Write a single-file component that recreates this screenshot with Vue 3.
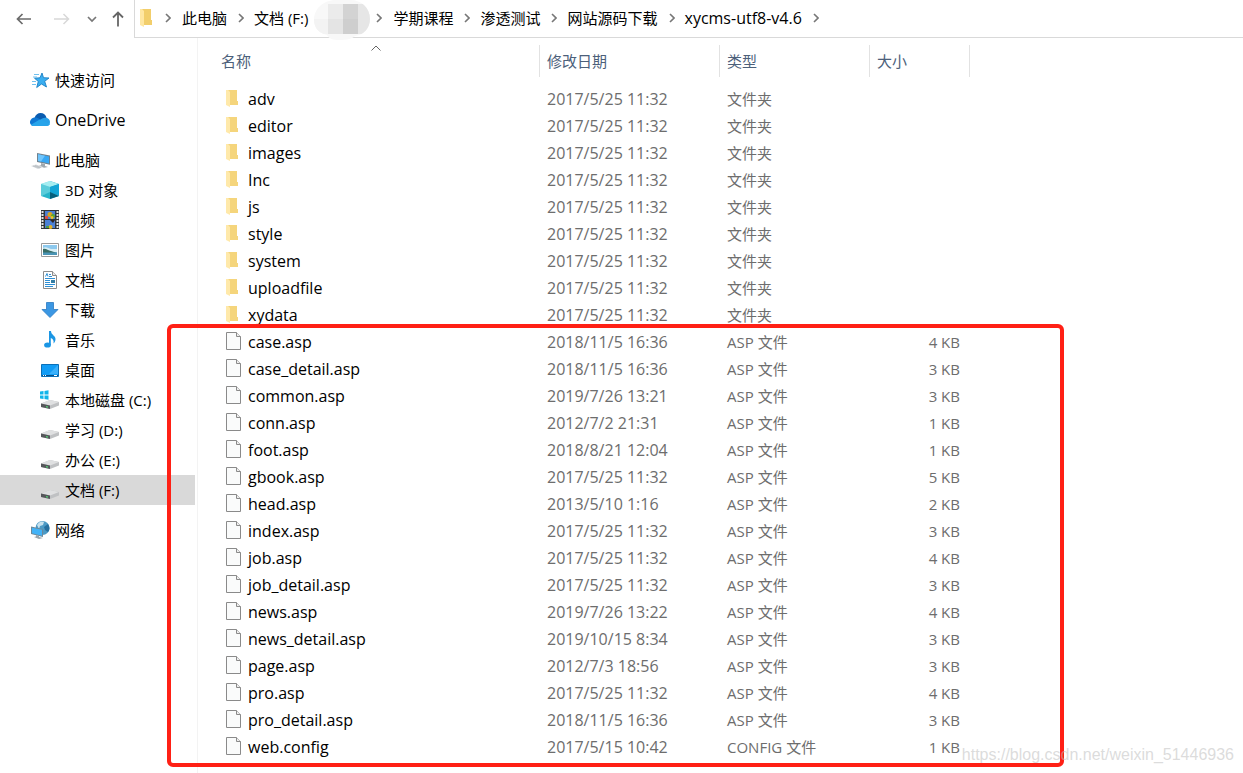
<script setup>
const crumbs = [
  { label: '此电脑' },
  { label: '文档 (F:)', masked: true },
  { label: '学期课程' },
  { label: '渗透测试' },
  { label: '网站源码下载' },
  { label: 'xycms-utf8-v4.6', latin: true },
]

const places = [
  { icon: 'star', label: '快速访问', root: true },
  { icon: 'cloud', label: 'OneDrive', root: true, latin: true },
  { icon: 'pc', label: '此电脑', root: true },
  { icon: 'cube', label: '3D 对象' },
  { icon: 'video', label: '视频' },
  { icon: 'picture', label: '图片' },
  { icon: 'doc', label: '文档' },
  { icon: 'download', label: '下载' },
  { icon: 'music', label: '音乐' },
  { icon: 'desktop', label: '桌面' },
  { icon: 'system', label: '本地磁盘 (C:)' },
  { icon: 'drive', label: '学习 (D:)' },
  { icon: 'drive', label: '办公 (E:)' },
  { icon: 'drive', label: '文档 (F:)', active: true },
  { icon: 'network', label: '网络', root: true },
]

const columns = [
  { key: 'name', label: '名称' },
  { key: 'date', label: '修改日期' },
  { key: 'type', label: '类型' },
  { key: 'size', label: '大小' },
]

const folders = ['adv', 'editor', 'images', 'Inc', 'js', 'style', 'system', 'uploadfile', 'xydata']
  .map((name) => ({ name, date: '2017/5/25 11:32', type: '文件夹', size: '', folder: true }))

const files = [
  ['case.asp', '2018/11/5 16:36', 4],
  ['case_detail.asp', '2018/11/5 16:36', 3],
  ['common.asp', '2019/7/26 13:21', 3],
  ['conn.asp', '2012/7/2 21:31', 1],
  ['foot.asp', '2018/8/21 12:04', 1],
  ['gbook.asp', '2017/5/25 11:32', 5],
  ['head.asp', '2013/5/10 1:16', 2],
  ['index.asp', '2017/5/25 11:32', 3],
  ['job.asp', '2017/5/25 11:32', 4],
  ['job_detail.asp', '2017/5/25 11:32', 3],
  ['news.asp', '2019/7/26 13:22', 4],
  ['news_detail.asp', '2019/10/15 8:34', 3],
  ['page.asp', '2012/7/3 18:56', 3],
  ['pro.asp', '2017/5/25 11:32', 4],
  ['pro_detail.asp', '2018/11/5 16:36', 3],
  ['web.config', '2017/5/15 10:42', 1],
].map(([name, date, kb]) => ({
  name,
  date,
  type: name.endsWith('.config') ? 'CONFIG 文件' : 'ASP 文件',
  size: `${kb} KB`,
}))

const rows = [...folders, ...files]
</script>

<template>
  <div class="explorer">
    <header class="topbar">
      <div class="history">
        <button type="button" aria-label="后退">
          <svg width="16" height="12" viewBox="0 0 16 12"><path d="M15 6H1.5M6.5 1L1.5 6l5 5" fill="none" stroke="#6b6b6b" stroke-width="1.7" /></svg>
        </button>
        <button type="button" aria-label="前进" disabled>
          <svg width="16" height="12" viewBox="0 0 16 12"><path d="M0 6h14.5M9.500 1l5 5-5 5" fill="none" stroke="#d8d8d8" stroke-width="1.5" /></svg>
        </button>
        <button type="button" aria-label="最近位置">
          <svg width="10" height="12" viewBox="0 0 10 12"><path d="M1 4l4 4 4-4" fill="none" stroke="#777" stroke-width="1.7" /></svg>
        </button>
        <button type="button" aria-label="上移">
          <svg width="12" height="16" viewBox="0 0 12 16"><path d="M6 15.500V1.500M1 6.500l5-5 5 5" fill="none" stroke="#666" stroke-width="1.8" /></svg>
        </button>
      </div>
      <nav class="address" aria-label="路径">
        <svg class="folder" width="12" height="18" viewBox="0 0 12 18">
          <path d="M2 0h9v11h1v5H4z" fill="#f2ce6b" /><path d="M0 0h2l2 2v16l-4-2z" fill="#ffe7a2" />
        </svg>
        <svg class="chev" width="6" height="10" viewBox="0 0 6 10"><path d="M1 1l4 4-4 4" fill="none" stroke="#777" stroke-width="1.6" /></svg>
        <template v-for="c in crumbs" :key="c.label">
          <a href="#" class="crumb" :class="{ latin: c.latin }">{{ c.label }}</a>
          <svg v-if="c.masked" class="mask" width="56" height="40" viewBox="0 0 56 40">
            <defs><clipPath id="blob"><path d="M0 20C0 9 9 0 22 0h14c12 0 20 8 20 19 0 9-6 16-15 17-3 3-9 4-15 4-7 0-11-1-13-5C4 33 0 27 0 20z" /></clipPath></defs>
            <g clip-path="url(#blob)">
              <path fill="#f8f8f8" d="M0 0h56v40H0z" /><path fill="#f3f3f3" d="M0 19h14v15H0z" />
              <path fill="#ebebeb" d="M14 4h15v15H14z" /><path fill="#e4e4e4" d="M14 19h15v15H14z" />
              <path fill="#d3d3d3" d="M29 4h15v15H29z" /><path fill="#cecece" d="M29 19h15v15H29z" />
              <path fill="#e6e6e6" d="M44 4h12v30H44z" />
            </g>
          </svg>
          <svg class="chev" :class="{ tight: c.masked }" width="6" height="10" viewBox="0 0 6 10"><path d="M1 1l4 4-4 4" fill="none" stroke="#777" stroke-width="1.6" /></svg>
        </template>
      </nav>
    </header>

    <div class="body">
      <nav class="sidebar" aria-label="导航窗格">
        <a v-for="p in places" :key="p.label + p.icon" href="#" class="place" :class="{ root: p.root, active: p.active }">
          <svg width="20" height="20" viewBox="0 0 20 20">
            <g v-if="p.icon === 'star'">
              <path d="M12 3l1.500 4.700 5.500.3-4.300 3.300 1.800 5.700-5-3-4.800 3.500 1.600-6L4.500 8.200l5.500-.4z" fill="#3aaef0" stroke="#1a7fc4" stroke-width=".9" />
              <path d="M4 4.500h5M3 7h4M2 11.500h4M2 14.500h4" stroke="#6fc0ef" stroke-width="1" />
            </g>
            <g v-else-if="p.icon === 'cloud'">
              <path d="M4.500 8C5.500 4.500 8 3 10.500 3c3 0 5.300 1.700 6 4.800L11 12z" fill="#0a5cb0" />
              <path d="M3.500 16C1.500 16 0 14.300 0 12.300 0 9.800 2 7.500 5 7.500c2 0 3 .6 5 2L17 16z" fill="#0f78d4" />
              <path d="M9.500 10.500c2-2 4-3 6.500-2.700C18.500 8 20 10 20 12c0 2.500-1.500 4-3.500 4H4z" fill="#28a0e8" />
              <path d="M9.800 9.500L20 14c-.6 1.300-2 2-3.500 2h-13c-1 0-2-.4-2.600-1.200z" fill="#27a4ea" />
            </g>
            <g v-else-if="p.icon === 'pc'">
              <path d="M7 3l13 2.500v9.300L7 12z" fill="#71828e" /><path d="M8 4.300l11 2.100v7L8 11z" fill="#38a8f5" /><path d="M8 4.300l7 1.400-4 5.900L8 11z" fill="#70c5fc" />
              <path d="M11 13l4 1v2l3 1-4 .7-5-2 2-.4z" fill="#a0a8af" /><path d="M1 16l5-1.500 7 2.500-5 2z" fill="#d5d9dc" /><path d="M3 16l7 2M5 15.500l6 2" stroke="#a4abb0" stroke-width=".5" />
            </g>
            <g v-else-if="p.icon === 'cube'">
              <path d="M1 4l9-3v9l-9 5z" fill="#77dce7" /><path d="M10 1l9 3v11l-9-5z" fill="#169fc8" /><path d="M1 4l9-3 9 3-9 3z" fill="#a5edf1" />
              <path d="M1 4l9 3v6l-9 3z" fill="#5accda" /><path d="M19 4l-9 3v6l9 3z" fill="#12a5d6" /><path d="M1 16l9-4 9 4-9 3z" fill="#27b4c9" /><path d="M10 12l9 4-9 3z" fill="#075f7c" />
            </g>
            <g v-else-if="p.icon === 'video'">
              <path d="M1 0h18v19H1z" fill="#303438" /><path d="M5 1h10v8H5zM5 10h10v8H5z" fill="#4b80d5" />
              <path d="M2.500 1v18M17.500 1v18" stroke="#e5e5e5" stroke-width="2" stroke-dasharray="2 1" />
              <path d="M5 6h3v3H5z" fill="#d84c45" /><circle cx="10" cy="4.500" r="2.500" fill="#d9a51e" /><circle cx="13" cy="6" r="2" fill="#58a837" /><circle cx="12" cy="7.500" r="1.500" fill="#efc126" />
              <path d="M10 10h5l-2 3z" fill="#302420" /><circle cx="10.500" cy="17" r="2" fill="#e3b329" /><path d="M6 16h3v2H6z" fill="#4d9b46" />
            </g>
            <g v-else-if="p.icon === 'picture'">
              <path d="M1.500 3.500h17v13h-17z" fill="#fff" stroke="#9b9b9b" /><path d="M3 5h14v10H3z" fill="#8dc9ee" /><path d="M3 8c3-2 5 0 8 1h6v3H3z" fill="#d9eff6" />
              <path d="M3 9c3-1 5 2 8 2 2 1 4 1 6 2H3z" fill="#386c65" /><path d="M3 12.500h14V15H3z" fill="#4a94b5" />
            </g>
            <g v-else-if="p.icon === 'doc'">
              <path d="M3.500 1.500h9l4 4v13h-13z" fill="#fff" stroke="#8c8c8c" /><path d="M12.500 1.500v4h4" fill="#e8e8e8" stroke="#8c8c8c" />
              <path d="M5.500 6.500l1.500-3 1 3M9 4.500h2M9 6.500h3M5 8.500h10M5 10.500h5M5 12.500h5M5 14.500h10M5 16.500h8" fill="none" stroke="#2f8fd4" /><path d="M11 10h4v3h-4z" fill="#347da4" />
            </g>
            <path v-else-if="p.icon === 'download'" d="M6.500 2.500h7v7h4.500l-8 8-8-8h4.500z" fill="#3b97e3" stroke="#2a78c2" stroke-width=".8" />
            <g v-else-if="p.icon === 'music'">
              <path d="M9 1h2c0 4 4.500 4.500 4.500 8 0 2-1 3.500-2 4.500.6-3-.5-4.500-2.700-5.500V15H9z" fill="#1b96e4" /><ellipse cx="7.500" cy="15" rx="3.400" ry="2.600" fill="#1b96e4" />
            </g>
            <g v-else-if="p.icon === 'desktop'">
              <path d="M1.500 4.500h17v12h-17z" fill="#119cf5" stroke="#0b70b8" /><path d="M18 5v9L9 14z" fill="#3ab0fb" /><path d="M2 15.500h16" stroke="#084f87" /><path d="M3 15.500h1M5 15.500h1M14 15.500h3" stroke="#fff" />
            </g>
            <g v-else-if="p.icon === 'network'">
              <circle cx="12.500" cy="8" r="7" fill="#4c9ac5" /><path d="M7 5c2-4 6-4 7-3l-1 3-3 1-1 3z" fill="#c8e2ee" /><path d="M14 7l4-3c2 3 2 6 0 8l-3-2z" fill="#256f9f" />
              <path d="M1 6.500l12 2.500v8L1 14z" fill="#6c899b" /><path d="M2 7.700l10 2.100v5.900L2 13.200z" fill="#42b3f8" /><path d="M6 15l3 1v1l4 1-4 1-5-2 2-.5z" fill="#9aa5ac" />
            </g>
            <g v-else>
              <g v-if="p.icon === 'system'" fill="#12b5ea"><path d="M0 1.500L3.500 1v3.500H0zM4.500.9L8.500.3v4.200h-4zM0 5.500h3.500V9L0 8.500zM4.500 5.500h4v4.200l-4-.6z" /></g>
              <path d="M1 13.500L10 10l9 2v3.500L10 19l-9-2z" fill="#bfc1c3" /><path d="M1 13.500l9-3.500 9 2-9 3.500z" fill="#dfe0e1" /><path d="M1 13.500l9 2V19l-9-2z" fill="#55575a" /><path d="M6 16.700l2 .4" stroke="#55d176" stroke-width="1.200" />
            </g>
          </svg>
          <span :class="{ latin: p.latin }">{{ p.label }}</span>
        </a>
      </nav>

      <main class="main">
        <div class="list">
          <table>
            <colgroup><col v-for="c in columns" :key="c.key" :class="'col-' + c.key" /></colgroup>
            <thead>
              <tr>
                <th v-for="c in columns" :key="c.key" scope="col" :class="'head-' + c.key">
                  <button type="button">{{ c.label }}</button>
                  <svg v-if="c.key === 'name'" class="sort" width="10" height="6" viewBox="0 0 10 6"><path d="M.5 5.500L5 1l4.500 4.500" fill="none" stroke="#666" /></svg>
                </th>
              </tr>
            </thead>
            <tbody>
              <tr v-for="r in rows" :key="r.name">
                <td>
                  <div class="file">
                    <svg v-if="r.folder" width="16" height="20" viewBox="0 0 16 20">
                      <path d="M2 1h9v11h1v4H4z" fill="#f5d57c" /><path d="M0 1h2l2 2v15l-4-2z" fill="#ffe9aa" />
                    </svg>
                    <svg v-else width="16" height="20" viewBox="0 0 16 20">
                      <path d="M.5.500h10l4 4v13H.5z" fill="#fafbfb" stroke="#8a8a8a" /><path d="M10.500.500v4h4" fill="#eee" stroke="#8a8a8a" />
                    </svg>
                    <span class="latin">{{ r.name }}</span>
                  </div>
                </td>
                <td class="meta latin">{{ r.date }}</td>
                <td class="meta">{{ r.type }}</td>
                <td class="meta size">{{ r.size }}</td>
              </tr>
            </tbody>
          </table>
          <div class="highlight"></div>
        </div>
      </main>
    </div>
    <div class="watermark">https://blog.csdn.net/weixin_51446936</div>
  </div>
</template>

<style>
body { margin: 0; background: #fff; }
</style>

<style scoped>
.explorer {
  position: relative;
  display: flex;
  flex-direction: column;
  min-height: 100vh;
  overflow: hidden;
  box-sizing: border-box;
  background: #fff;
  color: #000;
  font-family: "Open Sans", "Noto Sans CJK SC", sans-serif;
  font-size: 15px;
  line-height: 20px;
}
.latin { font-size: 16px; }
button { margin: 0; padding: 0; border: 0; background: none; font: inherit; color: inherit; }
a { color: inherit; text-decoration: none; }
svg { display: block; flex: none; }

.topbar { display: flex; height: 38px; }
.history { display: flex; align-items: center; gap: 22px; width: 118px; padding-left: 16px; }
.history button:nth-child(3) { margin-left: -5px; }
.history button:nth-child(4) { margin-left: -7px; }
.address {
  flex: 1;
  display: flex;
  align-items: center;
  padding: 0 0 2px 5px;
  border-left: 1px solid #d9d9d9;
  border-bottom: 1px solid #d9d9d9;
}
.chev { margin: 0 10px 0 11px; }
.folder + .chev { margin: 0 11px 0 13px; }
.chev.tight { margin: 0 11px 0 6px; }
.crumb { white-space: nowrap; }
.mask { margin: 0 0 -4px 6px; }

.body { flex: 1; display: flex; }
.sidebar {
  flex: none;
  width: 198px;
  box-sizing: border-box;
  padding: 27px 2px 0 0;
  border-right: 1px solid #f3f3f3;
}
.place { display: flex; align-items: center; gap: 5px; height: 30px; padding-left: 40px; white-space: nowrap; }
.place.root { padding-left: 30px; }
.place.root + .place.root, .place.active + .place.root { margin-top: 10px; }
.place.active { background: #d9d9d9; }

.main { flex: 1; min-width: 0; }
.list { position: relative; width: 772px; }
table { width: 100%; table-layout: fixed; border-collapse: separate; border-spacing: 0; }
.col-name { width: 342px; }
.col-date { width: 180px; }
.col-type { width: 150px; }
.col-size { width: 100px; }
th { position: relative; padding: 7px 0 8px; font-weight: 400; }
th button {
  display: block;
  width: 100%;
  height: 32px;
  padding-left: 7px;
  border-right: 1px solid #e2e2e2;
  color: #4c607a;
  text-align: left;
}
.head-name button { padding-left: 23px; }
.sort { position: absolute; top: 7px; left: 173px; }
td { height: 27px; padding: 0 0 0 7px; white-space: nowrap; }
td:first-child { padding-left: 28px; }
.file { display: flex; align-items: center; gap: 6px; }
.meta { color: #6d6d6d; }
.size { padding-right: 10px; text-align: right; }

.highlight {
  position: absolute;
  top: 286px;
  right: -94px;
  bottom: -7px;
  left: -31px;
  border: 4px solid #ff2015;
  border-radius: 6px;
  pointer-events: none;
}
.watermark {
  position: absolute;
  right: 9px;
  bottom: 8px;
  color: rgba(190, 190, 190, 0.55);
  font-family: "Liberation Sans", sans-serif;
  font-size: 16px;
}
</style>
